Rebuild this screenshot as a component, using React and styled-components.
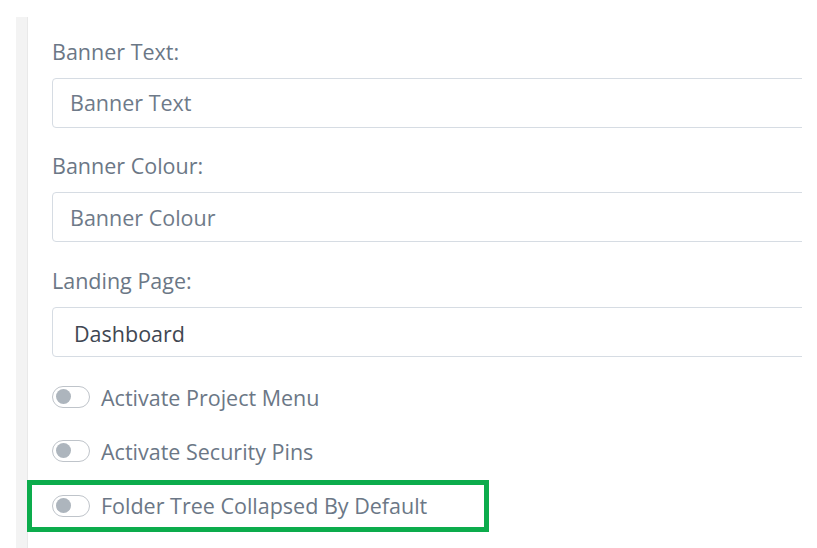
import React from 'react'
import styled, { createGlobalStyle } from 'styled-components'

const GlobalStyle = createGlobalStyle`
	html, body {
		margin: 0;
		padding: 0;
		background: #ffffff;
	}
	body {
		font-family: 'Open Sans', 'Liberation Sans', sans-serif;
	}
`

const Page = styled.div`
	width: 817px;
	height: 548px;
	padding: 17px 0 0 16px;
	box-sizing: border-box;
	overflow: hidden;
`

const Panel = styled.div`
	height: 100%;
	border-left: 11px solid #f3f3f3;
	box-shadow: inset 1px 0 0 #e9e9e9;
	padding: 18.5px 15px 0 0;
	box-sizing: border-box;
`

const Content = styled.div`
	overflow: hidden;
	padding-left: 25px;
`

const Field = styled.div`
	margin-bottom: 22.5px;
`

const Label = styled.label`
	display: block;
	font-size: 21.5px;
	line-height: 32px;
	color: #6b7786;
	margin-bottom: 10px;
`

const TextInput = styled.div`
	box-sizing: border-box;
	width: calc(100% + 20px);
	height: 50px;
	border: 1px solid #d6dce3;
	border-radius: 4px;
	padding-left: ${(p) => (p.$select ? '21px' : '17px')};
	padding-top: ${(p) => (p.$select ? '3px' : '0')};
	display: flex;
	align-items: center;
	font-size: 21.5px;
	color: ${(p) => (p.$select ? '#3f4752' : '#6e7a89')};
`

const Toggles = styled.div`
	margin-top: -8px;
	display: flex;
	flex-direction: column;
	gap: 2.25px;
`

const ToggleRow = styled.div`
	box-sizing: border-box;
	height: 52px;
	display: flex;
	align-items: center;
	gap: 11px;
	font-size: 21.5px;
	color: #6b7786;
	${(p) =>
		p.$highlight &&
		`
		width: 462px;
		margin-left: -25px;
		padding-left: 20px;
		border: 5px solid #0cac4c;
	`}
`

const Switch = styled.span`
	position: relative;
	box-sizing: border-box;
	width: 38px;
	height: 22px;
	border: 1.5px solid #bfc4ca;
	border-radius: 11px;
	flex-shrink: 0;

	&::after {
		content: '';
		position: absolute;
		left: 2.5px;
		top: 2px;
		width: 15px;
		height: 15px;
		border-radius: 50%;
		background: #adb5bd;
	}
`

const fields = [
	{ label: 'Banner Text:', value: 'Banner Text' },
	{ label: 'Banner Colour:', value: 'Banner Colour' },
	{ label: 'Landing Page:', value: 'Dashboard', select: true }
]

const toggles = [
	{ label: 'Activate Project Menu' },
	{ label: 'Activate Security Pins' },
	{ label: 'Folder Tree Collapsed By Default', highlight: true }
]

export default function App() {
	return (
		<>
			<GlobalStyle />
			<Page>
				<Panel>
					<Content>
						{fields.map((f) => (
							<Field key={f.label}>
								<Label>{f.label}</Label>
								<TextInput $select={f.select}>{f.value}</TextInput>
							</Field>
						))}
						<Toggles>
							{toggles.map((t) => (
								<ToggleRow key={t.label} $highlight={t.highlight}>
									<Switch />
									{t.label}
								</ToggleRow>
							))}
						</Toggles>
					</Content>
				</Panel>
			</Page>
		</>
	)
}
